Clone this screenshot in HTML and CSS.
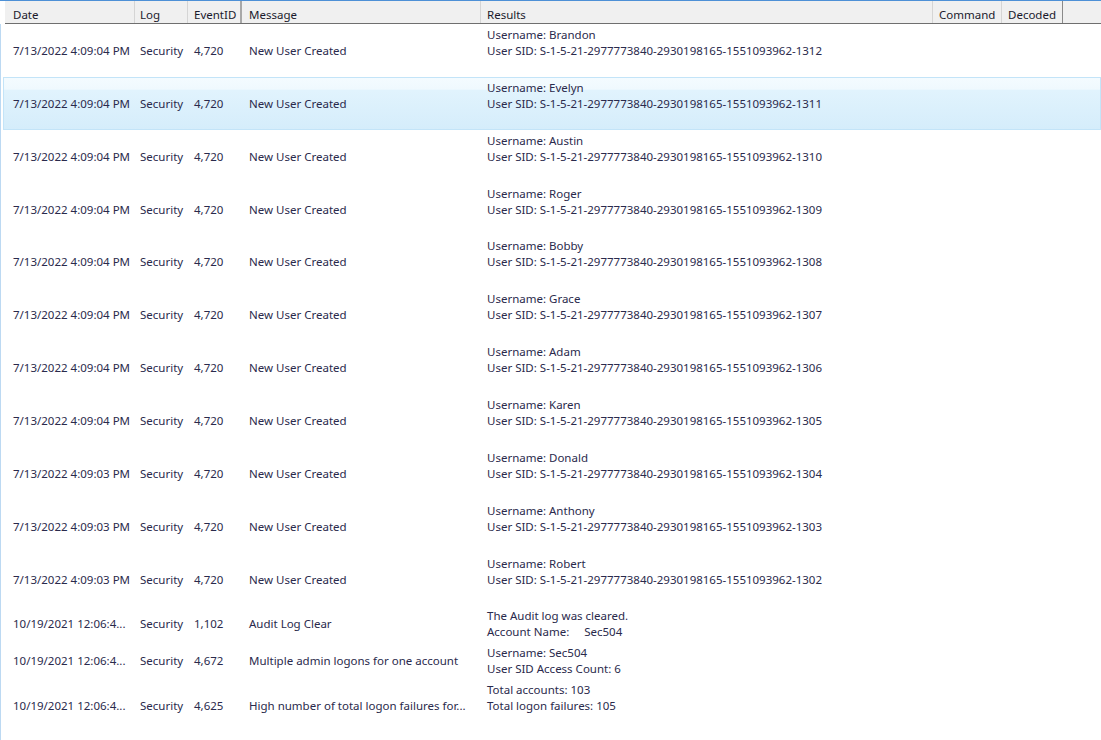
FILE: index.html
```html
<!DOCTYPE html>
<html>
<head>
<meta charset="utf-8">
<link rel="stylesheet" href="styles.css">
</head>
<body>
<div class="list">
  <div class="head">
    <div class="hc c1">Date</div>
    <div class="hc c2">Log</div>
    <div class="hc c3 dark">EventID</div>
    <div class="hc c4">Message</div>
    <div class="hc c5">Results</div>
    <div class="hc c6">Command</div>
    <div class="hc c7 dark2">Decoded</div>
    <div class="hc c8"></div>
  </div>
  <div class="rows">
    <div class="row">
      <div class="cell c1">7/13/2022 4:09:04 PM</div><div class="cell c2">Security</div><div class="cell c3">4,720</div><div class="cell c4">New User Created</div>
      <div class="cell c5 res trail"><div>Username: Brandon</div><div>User SID: S-1-5-21-2977773840-2930198165-1551093962-1312</div></div>
    </div>
    <div class="row selected">
      <div class="cell c1">7/13/2022 4:09:04 PM</div><div class="cell c2">Security</div><div class="cell c3">4,720</div><div class="cell c4">New User Created</div>
      <div class="cell c5 res trail"><div>Username: Evelyn</div><div>User SID: S-1-5-21-2977773840-2930198165-1551093962-1311</div></div>
    </div>
    <div class="row">
      <div class="cell c1">7/13/2022 4:09:04 PM</div><div class="cell c2">Security</div><div class="cell c3">4,720</div><div class="cell c4">New User Created</div>
      <div class="cell c5 res trail"><div>Username: Austin</div><div>User SID: S-1-5-21-2977773840-2930198165-1551093962-1310</div></div>
    </div>
    <div class="row">
      <div class="cell c1">7/13/2022 4:09:04 PM</div><div class="cell c2">Security</div><div class="cell c3">4,720</div><div class="cell c4">New User Created</div>
      <div class="cell c5 res trail"><div>Username: Roger</div><div>User SID: S-1-5-21-2977773840-2930198165-1551093962-1309</div></div>
    </div>
    <div class="row">
      <div class="cell c1">7/13/2022 4:09:04 PM</div><div class="cell c2">Security</div><div class="cell c3">4,720</div><div class="cell c4">New User Created</div>
      <div class="cell c5 res trail"><div>Username: Bobby</div><div>User SID: S-1-5-21-2977773840-2930198165-1551093962-1308</div></div>
    </div>
    <div class="row">
      <div class="cell c1">7/13/2022 4:09:04 PM</div><div class="cell c2">Security</div><div class="cell c3">4,720</div><div class="cell c4">New User Created</div>
      <div class="cell c5 res trail"><div>Username: Grace</div><div>User SID: S-1-5-21-2977773840-2930198165-1551093962-1307</div></div>
    </div>
    <div class="row">
      <div class="cell c1">7/13/2022 4:09:04 PM</div><div class="cell c2">Security</div><div class="cell c3">4,720</div><div class="cell c4">New User Created</div>
      <div class="cell c5 res trail"><div>Username: Adam</div><div>User SID: S-1-5-21-2977773840-2930198165-1551093962-1306</div></div>
    </div>
    <div class="row">
      <div class="cell c1">7/13/2022 4:09:04 PM</div><div class="cell c2">Security</div><div class="cell c3">4,720</div><div class="cell c4">New User Created</div>
      <div class="cell c5 res trail"><div>Username: Karen</div><div>User SID: S-1-5-21-2977773840-2930198165-1551093962-1305</div></div>
    </div>
    <div class="row">
      <div class="cell c1">7/13/2022 4:09:03 PM</div><div class="cell c2">Security</div><div class="cell c3">4,720</div><div class="cell c4">New User Created</div>
      <div class="cell c5 res trail"><div>Username: Donald</div><div>User SID: S-1-5-21-2977773840-2930198165-1551093962-1304</div></div>
    </div>
    <div class="row">
      <div class="cell c1">7/13/2022 4:09:03 PM</div><div class="cell c2">Security</div><div class="cell c3">4,720</div><div class="cell c4">New User Created</div>
      <div class="cell c5 res trail"><div>Username: Anthony</div><div>User SID: S-1-5-21-2977773840-2930198165-1551093962-1303</div></div>
    </div>
    <div class="row">
      <div class="cell c1">7/13/2022 4:09:03 PM</div><div class="cell c2">Security</div><div class="cell c3">4,720</div><div class="cell c4">New User Created</div>
      <div class="cell c5 res trail"><div>Username: Robert</div><div>User SID: S-1-5-21-2977773840-2930198165-1551093962-1302</div></div>
    </div>
    <div class="row">
      <div class="cell c1">10/19/2021 12:06:4...</div><div class="cell c2">Security</div><div class="cell c3">1,102</div><div class="cell c4">Audit Log Clear</div>
      <div class="cell c5 res"><div>The Audit log was cleared.</div><div>Account Name:<span class="tab">Sec504</span></div></div>
    </div>
    <div class="row">
      <div class="cell c1">10/19/2021 12:06:4...</div><div class="cell c2">Security</div><div class="cell c3">4,672</div><div class="cell c4">Multiple admin logons for one account</div>
      <div class="cell c5 res"><div>Username: Sec504</div><div>User SID Access Count: 6</div></div>
    </div>
    <div class="row">
      <div class="cell c1">10/19/2021 12:06:4...</div><div class="cell c2">Security</div><div class="cell c3">4,625</div><div class="cell c4">High number of total logon failures for...</div>
      <div class="cell c5 res trail"><div>Total accounts: 103</div><div>Total logon failures: 105</div></div>
    </div>
  </div>
</div>
</body>
</html>
```

FILE: styles.css
```css
html, body {
  margin: 0;
  height: 100%;
  background: #ffffff;
  overflow: hidden;
}

body {
  font-family: "Noto Sans", "Open Sans", sans-serif;
  font-size: 11.5px;
  color: #2a2a4c;
}

.list {
  height: 100%;
  display: flex;
  flex-direction: column;
  border-top: 1px solid #4d90d6;
  box-sizing: border-box;
}

.head,
.row {
  display: grid;
  grid-template-columns: 130px 53px 54px 239px 452px 69px 61px 1fr;
}

.head {
  margin-left: 5px;
  height: 23px;
  box-sizing: border-box;
  background: #f0f0f0;
  border-bottom: 1px solid #6f6f6f;
  line-height: 16px;
  color: #1a1a2c;
}

.hc {
  border-right: 1px solid #d5d5d5;
  padding-top: 6px;
  white-space: nowrap;
  overflow: hidden;
}

.hc.dark { border-right: 2px solid #a8a8a8; }
.hc.dark2 { border-right: 1px solid #8a8a8a; }
.hc.c8 { border-right: none; }

.rows {
  flex: 1;
  border-left: 1px solid #bcd9f2;
}

.row {
  margin-left: 2px;
  padding: 2px 0 1px 1px;
  border: 1px solid transparent;
  line-height: 15.96px;
}

.row.selected {
  border-color: #c3e4f8;
  background: linear-gradient(to bottom, #f4fbff 0%, #eff9fe 22%, #e1f3fd 24%, #d5edfb 100%);
}

.cell {
  align-self: center;
  white-space: nowrap;
  overflow: hidden;
}

.c1 { padding-left: 8px; }
.c2 { padding-left: 5px; }
.c3 { padding-left: 6px; }
.c4 { padding-left: 7px; }
.c5 { padding-left: 6px; }
.c6 { padding-left: 6px; }
.c7 { padding-left: 6px; }

.res.trail { padding-bottom: 15.96px; }

.tab { margin-left: 15px; }
```
